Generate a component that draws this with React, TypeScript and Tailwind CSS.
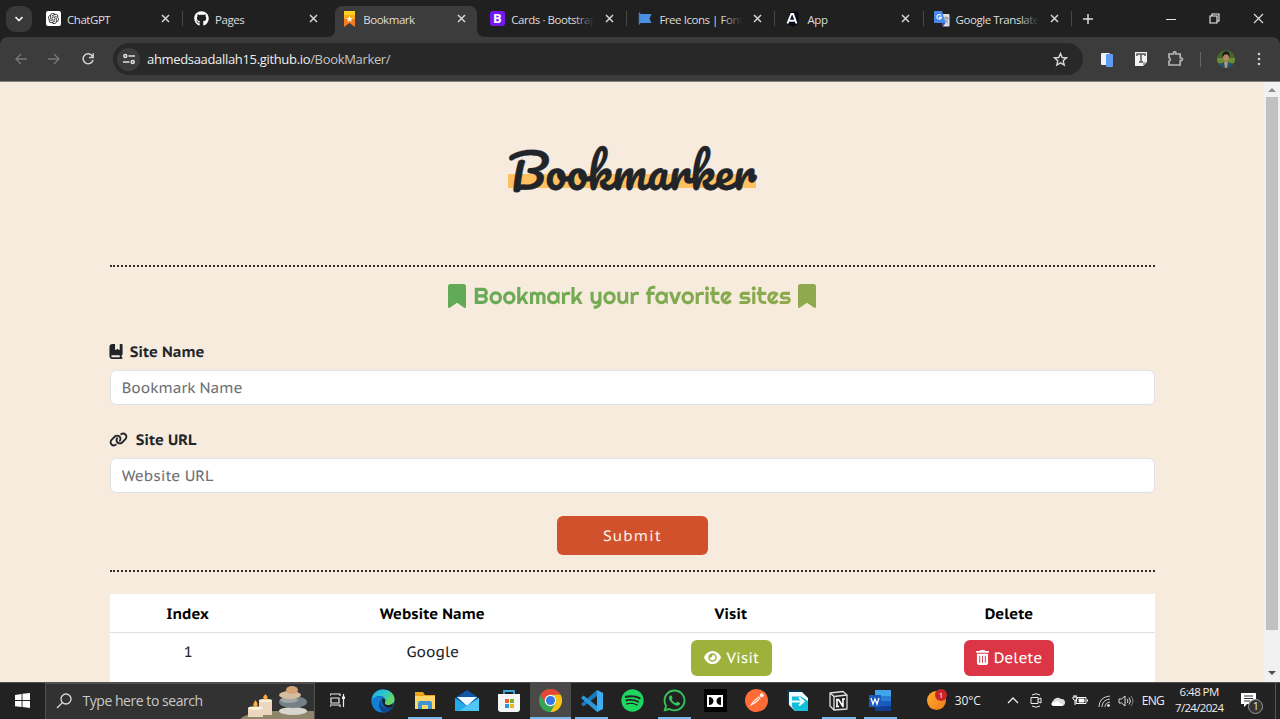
import type { ReactNode } from "react";
import { FaBookmark, FaBookBookmark, FaLink, FaEye, FaTrashCan, FaGithub, FaSpotify, FaWhatsapp } from "react-icons/fa6";
import { RiOpenaiFill } from "react-icons/ri";

function Close() {
  return (
    <svg className="h-[9px] w-[9px]" viewBox="0 0 9 9" fill="none" stroke="#d6d6d6" strokeWidth="1.500">
      <path d="M1 1l7 7M8 1L1 8" />
    </svg>
  );
}

function StarRibbon() {
  return (
    <svg className="h-4 w-4" viewBox="0 0 16 16">
      <path d="M2 0h11v16l-5.500-4-5.500 4z" fill="#f47c20" />
      <path d="M2 0h11v4H2z" fill="#ffd21f" />
      <path d="M2 4h11v4H2z" fill="#fbab1c" />
      <path d="M7.500 5l1 2 2.200.200-1.600 1.500.500 2.300-2.100-1.200-2.100 1.200.500-2.300-1.600-1.500L6.500 7z" fill="#fff6d8" />
    </svg>
  );
}

function BootstrapMark() {
  return <span className="flex h-[15px] w-[15px] items-center justify-center rounded-[3px] bg-[#7519ee] text-[13px] leading-none font-bold text-white">B</span>;
}

function FlagMark() {
  return (
    <svg className="h-4 w-4" viewBox="0 0 16 16">
      <path d="M1.500 1.500v12" stroke="#3b85dc" strokeWidth="1.500" />
      <path d="M2 3h11.500L11.500 7.500l2 4.500H2z" fill="#4a90e2" />
    </svg>
  );
}

function AppMark() {
  return (
    <svg className="h-4 w-4" viewBox="0 0 16 16">
      <path d="M4 1l7-1 2 4-1 9-5 3-6-3z" fill="#080b16" />
      <path d="M1.500 12.500L5.300 3h1.800l3.400 9.500M3.500 9.700h5" fill="none" stroke="#f4f6fb" strokeWidth="2" />
    </svg>
  );
}

function TranslateMark() {
  return (
    <svg className="h-4 w-4" viewBox="0 0 16 16">
      <path d="M6 3h8.500a1 1 0 0 1 1 1v10.500a1 1 0 0 1-1 1H9z" fill="#dcdfe3" />
      <path d="M9.500 7h5M12 5.500V7M14 7c-.5 2-2 4-4 5M10.500 8c1 2 2 3 3.500 4" stroke="#65758a" fill="none" strokeWidth=".8" />
      <path d="M1 0h7l3.500 12H1a1 1 0 0 1-1-1V1a1 1 0 0 1 1-1z" fill="#4688ee" />
      <path d="M7 4.400a2.300 2.300 0 1 0 .4 2H5" fill="none" stroke="#fff" strokeWidth="1.100" />
      <path d="M8 12h3.500L9 15.500z" fill="#2457b8" />
    </svg>
  );
}

type TabData = { title: string; icon: ReactNode; active?: boolean; line?: boolean; fade?: boolean };

const tabs: TabData[] = [
  { title: "ChatGPT", icon: <span className="flex h-[15px] w-[15px] items-center justify-center rounded-[2px] bg-white text-[#222]"><RiOpenaiFill size={13} /></span>, line: true },
  { title: "Pages", icon: <FaGithub size={15} color="#fff" /> },
  { title: "Bookmark", icon: <StarRibbon />, active: true },
  { title: "Cards · Bootstrap", icon: <BootstrapMark />, line: true, fade: true },
  { title: "Free Icons | Font", icon: <FlagMark />, line: true, fade: true },
  { title: "App", icon: <AppMark />, line: true },
  { title: "Google Translate", icon: <TranslateMark />, line: true, fade: true },
];

function Tab({ tab }: { tab: TabData }) {
  return (
    <div className="relative flex h-[37px] w-[148.100px] shrink-0 items-center pl-[10.500px]">
      {tab.active && (
        <svg className="absolute top-[6px] -left-[4px] h-[31px] w-[158px]" viewBox="0 0 158 31">
          <path d="M0 31Q8 31 8 23V8Q8 0 16 0H142Q150 0 150 8V23Q150 31 158 31Z" fill="#3c3c3c" />
        </svg>
      )}
      <span className="relative flex w-[21.500px] shrink-0 items-center">{tab.icon}</span>
      <span className="relative w-[83px] overflow-hidden pt-[2px] text-[11.500px] tracking-[-0.450px] whitespace-nowrap text-[#dedede]">
        {tab.title}
        {tab.fade && <span className="absolute inset-y-0 right-0 w-5 bg-gradient-to-r from-transparent to-[#202020]" />}
      </span>
      <span className="relative ml-[11px]"><Close /></span>
      {tab.line && <span className="absolute right-0 h-[15px] w-px bg-[#484848]" />}
    </div>
  );
}

function Browser() {
  return (
    <header className="shrink-0 bg-[#202020]">
      <div className="flex h-[37px] items-center">
        <div className="ml-[6px] flex h-[26px] w-[26px] shrink-0 items-center justify-center rounded-[9px] bg-[#393939]">
          <svg className="h-2 w-2" viewBox="0 0 8 8" fill="none" stroke="#eee" strokeWidth="1.700"><path d="M.500 2L4 5.500 7.500 2" /></svg>
        </div>
        <div className="ml-[3px] flex">{tabs.map((t) => <Tab key={t.title} tab={t} />)}</div>
        <svg className="ml-[11px] h-[10px] w-[10px] shrink-0" viewBox="0 0 10 10" stroke="#ddd" strokeWidth="1.500"><path d="M5 0v10M0 5h10" /></svg>
        <div className="mr-[16px] ml-auto flex items-center gap-[33px]">
          <svg className="h-[10px] w-[10px]" viewBox="0 0 10 10" stroke="#e2e2e2"><path d="M0 5.500h10" /></svg>
          <svg className="h-[11px] w-[11px]" viewBox="0 0 11 11" fill="none" stroke="#f2f2f2" strokeWidth="1.100"><path d="M1 3h7v7H1zM3 3V1h7v7H8" /></svg>
          <svg className="h-[11px] w-[11px]" viewBox="0 0 11 11" stroke="#e2e2e2" strokeWidth="1.100"><path d="M1 1l9 9M10 1l-9 9" /></svg>
        </div>
      </div>
      <div className="flex h-[45px] items-center rounded-t-[8px] border-b border-[#85807b] bg-[#3c3c3c] pl-[15px]">
        <svg className="h-3 w-3" viewBox="0 0 12 12" fill="none" stroke="#777" strokeWidth="1.300"><path d="M12 6H1M6 1L1 6l5 5" /></svg>
        <svg className="ml-[21px] h-3 w-3" viewBox="0 0 12 12" fill="none" stroke="#777" strokeWidth="1.300"><path d="M0 6h11M6 1l5 5-5 5" /></svg>
        <svg className="ml-[22px] h-3 w-3" viewBox="0 0 12 12" fill="none" stroke="#d2d2d2" strokeWidth="1.500"><path d="M10.500 3.300A5 5 0 1 0 11 7M11.200.300v4.200H7" /></svg>
        <div className="ml-[19px] flex h-8 w-[970px] items-center rounded-full bg-[#282828] pl-1">
          <span className="flex h-[23px] w-[23px] items-center justify-center rounded-full bg-[#3c3c3c]">
            <svg className="h-[12px] w-[12px]" viewBox="0 0 12 12" fill="none" stroke="#e0e0e0" strokeWidth="1.500"><circle cx="2.300" cy="3" r="1.500" /><path d="M5.500 3H12M0 9h6.500" /><circle cx="9.700" cy="9" r="1.500" /></svg>
          </span>
          <span className="ml-[7px] text-[13px] leading-5 tracking-[-0.330px] whitespace-nowrap text-[#eee]">ahmedsaadallah15.github.io<span className="text-[#c5c5c5]">/BookMarker/</span></span>
          <svg className="mr-[15px] ml-auto h-[15px] w-[15px]" viewBox="0 0 15 15" fill="none" stroke="#d8d8d8" strokeWidth="1.400"><path d="M7.500 1.500l1.700 4 4.300.400-3.300 2.900 1 4.200-3.700-2.200L3.800 13l1-4.200L1.500 5.900l4.300-.400z" /></svg>
        </div>
        <svg className="ml-[18px] h-[15px] w-[13px]" viewBox="0 0 13 15"><rect x="0" y="1" width="9" height="12" rx="1" fill="#edf3fb" /><rect x="5" y="2" width="7" height="13" rx="1" fill="#5e9df1" /></svg>
        <svg className="ml-[21px] h-[14px] w-[12px]" viewBox="0 0 12 14"><path d="M0 0h12v10l-4 4H0z" fill="#f2f2f2" /><path d="M2 4V2h8v2M6 2v8M4 10h4" fill="none" stroke="#555" strokeWidth="1.500" /><path d="M8 14v-4h4z" fill="#aaa" /></svg>
        <svg className="ml-[20px] h-[16px] w-[17px]" viewBox="0 0 17 16" fill="none" stroke="#b5b5b5" strokeWidth="1.700"><path d="M2 3h4.500V2a1.200 1.200 0 0 1 2.400 0v1h4.300v4h1a1.300 1.300 0 0 1 0 2.600h-1V14H2v-3.700a1.900 1.900 0 0 0 0-3.600z" /></svg>
        <span className="ml-[16px] h-[15px] w-px bg-[#656565]" />
        <svg className="ml-[16px] h-[18px] w-[18px] rounded-full" viewBox="0 0 18 18"><path fill="#47652e" d="M0 0h18v18H0z" /><path fill="#6b8e34" d="M0 8h18v5H0z" /><path d="M2 18c0-5 4-6 7-6s7 1 7 6z" fill="#245272" /><path d="M7 12h4l-1 6H8z" fill="#b59583" /><ellipse cx="9" cy="7.500" rx="2.800" ry="3.800" fill="#b98567" /><path d="M5.500 7C4 0 14-1 12.500 7L11 4.500H7.500z" fill="#19191b" /></svg>
        <svg className="ml-[22px] h-[14px] w-[4px]" viewBox="0 0 4 14" fill="#d0d0d0"><circle cx="2" cy="2" r="1.300" /><circle cx="2" cy="7" r="1.300" /><circle cx="2" cy="12" r="1.300" /></svg>
      </div>
    </header>
  );
}

function Page() {
  return (
    <main className="flex h-[599.500px] shrink-0 overflow-hidden bg-[#f7ebde] font-['PT_Sans_Caption','Noto_Sans',sans-serif] text-[#212529] [text-rendering:geometricPrecision]">
      <div className="w-[1264px] shrink-0 pt-[58px] pr-[109px] pl-[109.700px]">
        <h1 className="flex h-[64px] justify-center font-['Pacifico','Lato',cursive] text-[46.800px] leading-[62px] font-normal">
          <span className="h-full bg-[linear-gradient(transparent_34px,#ffc160_34px,#ffc160_48px,transparent_48px)] whitespace-nowrap [-webkit-text-stroke:0.300px_#212529]">Bookmarker</span>
        </h1>
        <section className="mt-[61px] h-[307px] border-y-2 border-dotted border-[#3b2b24]">
          <h2 className="mt-[13px] flex h-[32px] items-center justify-center gap-[7px] font-['Righteous','Lato',sans-serif] text-[23.400px] leading-8 font-normal">
            <FaBookmark className="h-6 w-[18px]" color="#61aa56" />
            <span className="bg-gradient-to-r from-[#66aa57] to-[#8eaa4c] bg-clip-text pt-px whitespace-nowrap text-transparent">Bookmark your favorite sites</span>
            <FaBookmark className="h-6 w-[18px]" color="#8fa94e" />
          </h2>
          <label className="mt-[28px] flex h-6 items-center gap-[7px] text-[15px] font-bold"><FaBookBookmark className="-mt-px -ml-px h-[15px] w-[14px]" /><span className="pt-[2px]">Site Name</span></label>
          <input className="mt-[6px] block h-[35px] w-full rounded-[6px] border border-[#dee2e6] bg-white px-[11px] pt-[2px] text-[15px] [text-rendering:geometricPrecision] placeholder:text-[#6c7075]" placeholder="Bookmark Name" />
          <label className="mt-[23px] flex h-6 items-center gap-[7px] text-[15px] font-bold"><FaLink className="-mt-px h-[15px] w-[19px] -translate-x-px" /><span className="pt-[2px]">Site URL</span></label>
          <input className="mt-[6px] block h-[35px] w-full rounded-[6px] border border-[#dee2e6] bg-white px-[11px] pt-[2px] text-[15px] [text-rendering:geometricPrecision] placeholder:text-[#6c7075]" placeholder="Website URL" />
          <button className="mx-auto mt-[23px] block h-[39px] w-[151px] rounded-[6px] bg-[#d1512d] pt-[3px] text-[15px] font-medium tracking-[1px] text-[#faeee4] [text-rendering:geometricPrecision]">Submit</button>
        </section>
        <table className="mt-[22.300px] w-full table-fixed border-collapse bg-white text-center text-[15px] text-[#212529]">
          <colgroup><col className="w-[156px]" /><col className="w-[333px]" /><col className="w-[264px]" /><col className="w-[292px]" /></colgroup>
          <thead><tr className="h-[38px] border-b border-[#dee2e6] text-black [&>th]:pt-[5px]"><th>Index</th><th>Website Name</th><th>Visit</th><th>Delete</th></tr></thead>
          <tbody><tr className="h-[60px] align-top">
            <td className="pt-[9px] pl-px">1</td><td className="pt-[9px] pl-px">Google</td>
            <td className="pt-[7px] pl-px"><button className="inline-flex h-[36px] w-[81px] items-center justify-center gap-[6px] rounded-[6px] bg-[#9eb23b] text-white [text-rendering:geometricPrecision]"><FaEye size={17} /><span className="pt-[3px]">Visit</span></button></td>
            <td className="pt-[7px]"><button className="inline-flex h-[36px] w-[90px] items-center justify-center gap-[5px] rounded-[6px] bg-[#dc3545] text-white [text-rendering:geometricPrecision]"><FaTrashCan className="h-[15px] w-[13px]" /><span className="pt-[3px]">Delete</span></button></td>
          </tr></tbody>
        </table>
      </div>
      <div className="flex w-4 flex-col items-center bg-[#f1f1f1]">
        <span className="mt-[6px] h-0 w-0 border-x-4 border-b-4 border-x-transparent border-b-[#8c8c8c]" />
        <span className="mt-[5px] h-[533px] w-[12px] bg-[#c1c1c1]" />
        <span className="mt-auto mb-[7px] h-0 w-0 border-x-4 border-t-4 border-x-transparent border-t-[#505050]" />
      </div>
    </main>
  );
}

function EdgeIcon() {
  return <svg viewBox="0 0 24 24" className="h-6 w-6"><defs><linearGradient id="edge" x1="0" y1="0" x2="1" y2=".5"><stop stopColor="#24a9eb" /><stop offset=".55" stopColor="#2cc6cb" /><stop offset="1" stopColor="#6bd95c" /></linearGradient></defs><circle cx="12" cy="12" r="11.500" fill="#0d69bd" /><path d="M.700 10C2 3 7 .500 12 .500c7 0 11.500 5 11.500 9.500 0 4-3 6-6.500 6-3 0-4-1.500-3-2.700 2-2.800-1-6.300-5-6.300-4 0-7 2-8.300 5z" fill="url(#edge)" /><path d="M.500 11C3 7 9 6 11 10c-3 2-4 8 3 11-5 5-14 0-13.500-10z" fill="#137fd1" /><path d="M10.500 10.500c-3 6 3 11 11 7.500-2 3-6 5.500-9 5.500-5-3-6-9-2-13z" fill="#10468f" /><path d="M11 10c1.500-1 4 .500 3 3-.500 1 0 3 3 3 2 0 4-.5 5-2 0 2 0 3-1 4-3 2-10 1-10-8z" fill="#202020" /></svg>;
}
function FolderIcon() {
  return <svg viewBox="0 0 22 20" className="h-5 w-[22px]"><path d="M1 1h8l2 3h10v13H1z" fill="#e8a318" /><path d="M1 5h20v13H1z" fill="#ffd667" /><path d="M4 18v-6q0-2 2-2h10q2 0 2 2v6h-4v-4H8v4z" fill="#3f94d8" /></svg>;
}
function MailIcon() {
  return <svg viewBox="0 0 24 22" className="h-[22px] w-6"><path d="M0 8L12 0l12 8v13H0z" fill="#0d57a6" /><path d="M2 7h20l-10 9z" fill="#eef8ff" /><path d="M0 8l12 8 12-8v13H0z" fill="#27a8ea" /><path d="M24 8v13H4z" fill="#51c6f5" /></svg>;
}
function StoreIcon() {
  return <svg viewBox="0 0 22 22" className="h-[22px] w-[22px]"><path d="M6 5V1h10v4" fill="none" stroke="#37a9dd" strokeWidth="1.800" /><path d="M0 4h22v15q0 3-3 3H3q-3 0-3-3z" fill="#f4f5f5" /><path d="M7 9h4v4H7z" fill="#ef5b36" /><path d="M12 9h4v4h-4z" fill="#72b52b" /><path d="M7 14h4v4H7z" fill="#229ed8" /><path d="M12 14h4v4h-4z" fill="#f4b31b" /></svg>;
}
function ChromeIcon() {
  return <svg viewBox="0 0 24 24" className="h-[23px] w-[23px]"><circle cx="12" cy="12" r="12" fill="#34a353" /><path d="M1.600 6A12 12 0 0 1 22.400 6H12a6 6 0 0 0-5.200 9z" fill="#e94335" /><path d="M22.400 6A12 12 0 0 1 12 24l5.200-9A6 6 0 0 0 12 6z" fill="#fbc116" /><circle cx="12" cy="12" r="6" fill="#fff" /><circle cx="12" cy="12" r="4.700" fill="#3478e5" /></svg>;
}
function CodeIcon() {
  return <svg viewBox="0 0 24 24" className="h-6 w-6"><path d="M17 1L1 15l2.500 2.500L17 7z" fill="#187bbb" /><path d="M17 23L1 9l2.500-2.500L17 17z" fill="#2a97dc" /><path d="M17 1l6 3v16l-6 3z" fill="#3caef0" /></svg>;
}
function PostmanIcon() {
  return <svg viewBox="0 0 24 24" className="h-[23px] w-[23px]"><circle cx="12" cy="12" r="12" fill="#ff6c37" /><path d="M4 19l5-7 5.500-4.500 2 2-4.500 4.500-7 4z" fill="#fff2e8" /><circle cx="17.500" cy="6.500" r="2" fill="#fff2e8" /><path d="M9 14l6-5" stroke="#ff6c37" /></svg>;
}
function ShareIcon() {
  return <svg viewBox="0 0 22 22" className="h-[22px] w-[22px]"><path d="M0 0h13l3 3H3v10H0z" fill="#073950" /><path d="M2 2h13l6 6v13H8l-6-6z" fill="#f0fcff" /><path d="M5 6.500h9l7 4.500v10H8l-3-4.500z" fill="#12bfd9" /><path d="M5 11.500h11M12 7.500l4.500 4-4.500 4" fill="none" stroke="#f3ffff" strokeWidth="2.200" /></svg>;
}
function NotionIcon() {
  return <svg viewBox="0 0 22 22" className="h-[22px] w-[22px]" fill="none" stroke="#dedede" strokeWidth="1.300" strokeLinejoin="round"><path d="M2 3l13-1.500 4 3.500v14L6 20l-4-4z" fill="#222" /><path d="M2 3l4 3.500V20M6 6.500L19 5" /><path d="M9 16.500v-7h1.500l4.500 7V9M8 9.500h2M8 16.500h3M14 9h3" stroke="#fff" strokeWidth="1.600" /></svg>;
}
function WordIcon() {
  return <svg viewBox="0 0 23 22" className="h-[22px] w-[23px]"><path d="M6 0h16v6H6z" fill="#41a5ee" /><path d="M6 6h16v5H6z" fill="#2b7cd3" /><path d="M6 11h16v5H6z" fill="#185abd" /><path d="M6 16h16v5H6z" fill="#103f91" /><path d="M0 5h12v12H0z" fill="#185abd" /><path d="M2 8l2 6 2-5 2 5 2-6" fill="none" stroke="#fff" strokeWidth="1.300" /></svg>;
}

const apps: { name: string; icon: ReactNode; open?: boolean; active?: boolean; wide?: boolean }[] = [
  { name: "Edge", icon: <EdgeIcon />, wide: true },
  { name: "Explorer", icon: <FolderIcon />, open: true, wide: true },
  { name: "Mail", icon: <MailIcon />, wide: true },
  { name: "Store", icon: <StoreIcon />, wide: true },
  { name: "Chrome", icon: <ChromeIcon />, open: true, active: true },
  { name: "Code", icon: <CodeIcon />, open: true },
  { name: "Spotify", icon: <FaSpotify size={23} color="#1ed760" /> },
  { name: "WhatsApp", icon: <FaWhatsapp size={25} color="#35c75d" />, open: true },
  { name: "Dolby", icon: <span className="flex h-[23px] w-[23px] items-center justify-center bg-black"><svg viewBox="0 0 16 12" className="h-3 w-4"><path d="M0 0h16v12H0z" fill="#fff" /><path d="M2 2c6 0 6 8 0 8zM14 2c-6 0-6 8 0 8z" fill="#080808" /></svg></span> },
  { name: "Postman", icon: <PostmanIcon /> },
  { name: "Share", icon: <ShareIcon /> },
  { name: "Notion", icon: <NotionIcon />, open: true },
  { name: "Word", icon: <WordIcon />, open: true },
];

function CandleArt() {
  return (
    <svg className="ml-auto h-9 w-[76px] shrink-0" viewBox="0 0 76 36">
      <path d="M2 36q10-8 36-8t38 0v8z" fill="#8e856b" />
      <path d="M10 25h15v9H10zM21 17h13v15H21z" fill="#ecd6bd" /><ellipse cx="17.500" cy="25" rx="7.500" ry="1.800" fill="#fff0d9" /><ellipse cx="27.500" cy="17.500" rx="6.500" ry="1.600" fill="#fff0d9" />
      <path d="M17 24c-4-3 0-4 0-7 4 4 3 6 0 7zM27 17c-4-3 0-4 0-6 4 3 3 5 0 6z" fill="#ffac45" />
      <ellipse cx="55" cy="28" rx="14" ry="4" fill="#d8d6cf" /><ellipse cx="55" cy="19" rx="14" ry="6" fill="#728087" /><ellipse cx="51" cy="17" rx="9" ry="3" fill="#a1a6a4" /><ellipse cx="52" cy="12" rx="11" ry="4" fill="#d5bda0" /><ellipse cx="54" cy="7" rx="6" ry="4" fill="#d4a478" />
    </svg>
  );
}

function Taskbar() {
  return (
    <footer className="flex h-[37.500px] shrink-0 items-center border-t border-[#555150] bg-[#222] text-[#eee]">
      <div className="flex w-[45px] shrink-0 justify-center"><svg viewBox="0 0 16 16" className="h-[15px] w-[15px]" fill="#fff"><path d="M0 2l7-1v6.500H0zM8 .9L16 0v7.500H8zM0 8.500h7V15l-7-1zM8 8.500h8V16l-8-1z" /></svg></div>
      <div className="flex h-full w-[270px] shrink-0 items-center border border-b-0 border-[#505050] bg-[#323232] pl-[10px]">
        <svg className="h-4 w-4 shrink-0" viewBox="0 0 16 16" fill="none" stroke="#ddd" strokeWidth="1.300"><circle cx="10" cy="6" r="5" /><path d="M6.500 9.500L1 15" /></svg>
        <span className="-mt-px ml-[10.500px] text-[14px] tracking-[-0.460px] whitespace-nowrap text-[#c9c9c9]">Type here to search</span>
        <CandleArt />
      </div>
      <svg className="ml-[15px] h-[15px] w-4 shrink-0" viewBox="0 0 16 15" fill="none" stroke="#eee" strokeWidth="1.200"><path d="M0 3V1h10v2M1 5h8v5H1zM0 14v-2h10v2M13.500 1v13" /><path d="M12 3.500h3v2.500h-3z" fill="#eee" stroke="none" /></svg>
      <div className="ml-[16px] flex h-full shrink-0">
        {apps.map((a) => (
          <div key={a.name} className={`relative flex h-full items-center justify-center ${a.wide ? "w-[42px]" : "w-[41.200px]"} ${a.active ? "bg-[#4b4948]" : ""}`}>
            {a.icon}
            {a.open && <span className={a.active ? "absolute inset-x-0 bottom-0 h-[2px] bg-[#76b9ed]" : "absolute inset-x-1 bottom-0 h-[2px] bg-[#76b9ed]"} />}
          </div>
        ))}
      </div>
      <div className="flex flex-1 items-center pl-[26px] text-[12px] tracking-[-0.500px]">
        <span className="relative mr-[9px] h-[19px] w-[19px] shrink-0 rounded-full bg-gradient-to-br from-[#ffb02c] to-[#ef781c]"><span className="absolute -top-[2px] -right-[1px] flex h-[12px] w-[12px] items-center justify-center rounded-full bg-[#c82725] text-[8px] text-white">1</span></span>
        <span className="w-[27px] shrink-0 tracking-[-0.100px]">30°C</span>
        <svg className="ml-[25px] h-[7px] w-[12px] shrink-0" viewBox="0 0 12 7" fill="none" stroke="#eee" strokeWidth="1.300"><path d="M1 6l5-5 5 5" /></svg>
        <svg className="ml-[11px] h-[15px] w-3 shrink-0" viewBox="0 0 12 15" fill="none" stroke="#eee"><path d="M1 4.500h7v6H1zM8 6.500l3-1.500v5L8 8.500M2 2q4-2.500 8 0M2 13q4 2.500 8 0" /></svg>
        <svg className="ml-2 h-[10px] w-[15px] shrink-0" viewBox="0 0 15 10"><path d="M3 10a3 3 0 0 1 0-5 5 5 0 0 1 8-2 3.500 3.500 0 0 1 1 7z" fill="#dedede" /><path d="M1 8l6-3 6 4-1 1H3z" fill="#fff" /></svg>
        <svg className="ml-[7px] h-[11px] w-[16px] shrink-0" viewBox="0 0 16 11" fill="none" stroke="#fff"><path d="M5 2.500h9v6H4zM15.500 4.500v2M1 2h4v2q-2 3-4 0zM2 0v2M4 0v2M3 5v5" /><path d="M7 4h5v3H7z" fill="#fff" /></svg>
        <svg className="ml-[10px] h-3 w-3 shrink-0" viewBox="0 0 12 12" fill="none" stroke="#ccc"><path d="M1 12Q1 2 12 1M4 12Q4 5 12 4M7 12Q7 8 12 7" /><circle cx="10.500" cy="10.500" r="1.300" fill="#fff" stroke="none" /></svg>
        <svg className="ml-[8px] h-3 w-[16px] shrink-0" viewBox="0 0 16 12" fill="none" stroke="#ddd"><path d="M1 4h2.500L7 1v10L3.500 8H1z" /><path d="M9 4q2 2 0 4M11 2.500q3 3.500 0 7" /><path d="M13 1q4 5 0 10" stroke="#888" /></svg>
        <span className="ml-[8px] w-[22px] shrink-0 tracking-[-0.700px]">ENG</span>
        <span className="ml-[8.500px] flex w-[54px] shrink-0 flex-col items-center pb-[1px] text-[11.500px] leading-[16.500px] tracking-[-0.550px] whitespace-nowrap"><span>6:48 PM</span><span className="tracking-[-0.700px]">7/24/2024</span></span>
        <span className="relative ml-[15px] h-[15px] w-4 shrink-0">
          <svg viewBox="0 0 16 15" className="h-[15px] w-4"><path d="M0 0h15v11H6l-3 3v-3H0z" fill="#fff" /><path d="M3 3h9M3 5.500h9M3 8h6" stroke="#333" /></svg>
          <span className="absolute top-[6px] left-[7px] flex h-[15px] w-[15px] items-center justify-center rounded-full border border-[#999] bg-[#333] text-[10px]">1</span>
        </span>
      </div>
      <span className="h-full w-px bg-[#555]" /><span className="w-1" />
    </footer>
  );
}

export default function App() {
  return (
    <div className="flex h-[719px] w-[1280px] flex-col overflow-hidden font-['Segoe_UI','Open_Sans','Noto_Sans',sans-serif]">
      <Browser />
      <Page />
      <Taskbar />
    </div>
  );
}
